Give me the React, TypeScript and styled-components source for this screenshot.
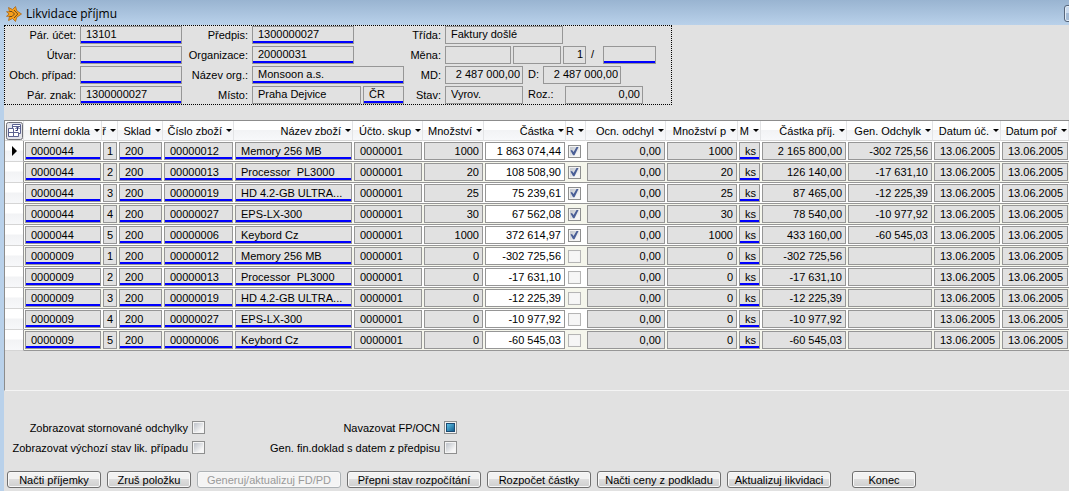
import React, { useState } from "react";
import styled, { createGlobalStyle, css } from "styled-components";

const GlobalStyle = createGlobalStyle`
  *, *::before, *::after { box-sizing: border-box; }
  html, body { margin: 0; padding: 0; background: #e1e1e1; }
  body, input, button { font: 11px/14px "Liberation Sans", Arial, sans-serif; color: #000; }
`;

const Window = styled.main`
  display: flex;
  flex-direction: column;
  min-height: 100vh;
  background: #e1e1e1;
  overflow: hidden;
`;

const TitleBar = styled.header`
  display: flex;
  align-items: center;
  justify-content: space-between;
  height: 25px;
  background: linear-gradient(#99b4d1, #b9d1ea);
`;

const Title = styled.h1`
  display: flex;
  align-items: center;
  gap: 4px;
  margin: 0;
  padding: 2px 0 0 6px;
  font: 12px/16px "Open Sans", "Noto Sans", sans-serif;
`;

const CaptionButton = styled.button`
  width: 28px;
  height: 17px;
  margin: 2px -23px 0 0;
  padding: 0;
  border: 1px solid #56657a;
  border-radius: 3px;
  background: linear-gradient(#c9daee 50%, #a3bbd6 50%);
  box-shadow: inset 0 0 0 1px #e3edf8;
`;

const Client = styled.div`
  flex: 1;
  border-left: 4px solid #b9d1ea;
`;

const HeaderForm = styled.form`
  display: grid;
  grid-template-columns: 71px 102px 62px 152px 33px 226px;
  grid-auto-rows: 18px;
  gap: 2px 4px;
  width: fit-content;
  border: 1px dotted #000;
`;

const FieldLabel = styled.label`
  padding-top: 2px;
  text-align: right;
  white-space: nowrap;
`;

const FieldGroup = styled.div`
  display: flex;
  gap: 2px;
`;

const InlineLabel = styled.label<{ $width: number }>`
  width: ${(p) => p.$width}px;
  padding: 1px 0 0 3px;
`;

const boxed = css<{ $link?: boolean; $right?: boolean }>`
  height: 18px;
  border: 1px solid #969696;
  box-shadow: ${(p) => (p.$link ? "inset 0 -2px 0 #0000ff" : "none")};
  text-align: ${(p) => (p.$right ? "right" : "left")};
`;

const Field = styled.input<{ $width: number; $link?: boolean; $right?: boolean }>`
  ${boxed}
  width: ${(p) => p.$width}px;
  padding: ${(p) => (p.$right ? "0 2px 2px 0" : "0 0 2px 5px")};
  border-radius: 0;
  background: #e1e1e1;
  outline: none;
`;

const GridPanel = styled.section`
  height: 271px;
  margin-top: 15px;
  border-top: 1px solid #8c8c8c;
  border-left: 1px solid #8c8c8c;
  border-bottom: 1px solid #f4f4f4;
  overflow: hidden;
`;

const Table = styled.table`
  width: 100%;
  min-width: 1064px;
  table-layout: fixed;
  border-collapse: separate;
  border-spacing: 0;
`;

const HeadCell = styled.th`
  height: 20px;
  padding: 0;
  border-bottom: 1px solid #d5d5d5;
  border-right: 1px solid #e3e4e6;
  background: linear-gradient(#fff 45%, #f2f3f5 50%, #f7f8fa);
  font-weight: normal;
`;

const SortButton = styled.button`
  display: flex;
  align-items: center;
  justify-content: flex-end;
  gap: 4px;
  width: 100%;
  height: 19px;
  padding: 0 1px 0 0;
  border: 0;
  background: none;
  overflow: hidden;
  white-space: nowrap;
`;

const Arrow = styled.i`
  flex: none;
  border: 3px solid transparent;
  border-top-color: #000;
  border-bottom: 0;
`;

const Row = styled.tr`
  background: #fff;
  &:nth-child(even) { background: #f5f6ec; }
`;

const Selector = styled.td`
  height: 21px;
  padding: 0 0 0 7px;
  border-right: 1px solid #969696;
  border-bottom: 1px solid #d5d5d5;
  background: linear-gradient(#fff 45%, #f2f3f5 50%, #f7f8fa);
`;

const Cell = styled.td`
  height: 21px;
  padding: 0 1px;
  border-bottom: 1px solid #969696;
`;

const CellBox = styled.div<{ $link?: boolean; $right?: boolean; $indent?: number }>`
  ${boxed}
  padding: 1px ${(p) => (p.$right ? 3 : 0)}px 0 ${(p) => (p.$right ? 0 : p.$indent ?? 5)}px;
  background: #e1e1e1;
  overflow: hidden;
  white-space: pre;
`;

const AmountInput = styled.input`
  display: block;
  width: 100%;
  height: 18px;
  padding: 0 3px 0 0;
  border: 1px solid #969696;
  border-radius: 0;
  background: #fff;
  text-align: right;
  outline: none;
`;

const Check = styled.input.attrs({ type: "checkbox" })<{ $faint?: boolean }>`
  appearance: none;
  display: grid;
  place-items: center;
  width: 13px;
  height: 13px;
  margin: 0;
  border: 1px solid ${(p) => (p.$faint ? "#b5b5b5" : "#8e8f8f")};
  background: ${(p) =>
    p.$faint ? "#f6f6f6" : "linear-gradient(135deg, #c8ccd2 15%, #f6f6f6 80%) content-box #f4f4f4"};
  padding: 1px;
  box-shadow: inset 0 0 0 1px #f4f4f4;

  &:checked::before {
    content: "";
    width: 9px;
    height: 9px;
    background: #4a5f97;
    clip-path: polygon(5% 45%, 22% 38%, 40% 62%, 76% 0, 97% 0, 50% 98%, 34% 98%);
  }
  &:indeterminate::before {
    content: "";
    width: 9px;
    height: 9px;
    border: 1px solid #1b4a72;
    background: linear-gradient(135deg, #5fc0e6, #14608f);
  }
`;

const CheckHolder = styled.div`
  padding-left: 1px;
`;

const Options = styled.fieldset`
  display: grid;
  grid-template-columns: 201px 252px;
  row-gap: 7px;
  margin: 30px 0 0;
  padding: 0;
  border: 0;
`;

const Option = styled.label`
  display: flex;
  align-items: center;
  justify-content: flex-end;
  gap: 4px;
  height: 13px;
  white-space: nowrap;
`;

const Actions = styled.footer`
  display: flex;
  gap: 6px;
  padding: 17px 0 3px 3px;
`;

const ActionButton = styled.button<{ $width: number; $apart?: boolean }>`
  width: ${(p) => p.$width}px;
  height: 17px;
  margin-left: ${(p) => (p.$apart ? 15 : 0)}px;
  padding: 0;
  border: 1px solid #707070;
  border-radius: 3px;
  background: linear-gradient(#f2f2f2 50%, #dddddd 50%, #cfcfcf);
  box-shadow: inset 0 0 0 1px #f8f8f8;
  white-space: nowrap;

  &:disabled {
    border-color: #adb2b5;
    background: #f4f4f4;
    color: #9a9a9a;
  }
`;

const Glyph = styled.svg`
  display: block;
`;

const LogoIcon = () => (
  <Glyph width="16" height="16" viewBox="0 0 16 16" aria-hidden="true">
    <path
      d="M2.500 1.500 6.500 3.500 9.500.5 10.800 4.800 15.500 8 10.800 11.200 9.500 15.500 6.500 12.500 2.500 14.500 3.500 10.300.5 10.300 3 8 .5 5.700 3.500 5.700Z"
      fill="#f9a01b"
      stroke="#a8671a"
      strokeWidth=".8"
    />
    <path d="M3.500 5.500H6L8.500 8 6 10.500H3.500M8 4l3.800 4L8 12" fill="none" stroke="#6b4a1c" strokeWidth="1" />
  </Glyph>
);

const GridIcon = () => (
  <Glyph width="18" height="18" viewBox="0 0 18 18" aria-hidden="true">
    <rect x="1.500" y=".5" width="16" height="17" rx="2" fill="#e4e5ec" stroke="#6f7078" />
    <path d="M7.500 2.500h8v9h-8z" fill="#fff" stroke="#5a6190" />
    <path d="M7.500 4.500h8" stroke="#5a6190" />
    <path d="M3.500 6.500h5v8h-5zM8.500 10.500h5v4h-5zM3.500 10.500h5" fill="#fff" stroke="#5a6190" />
    <path d="M10.500 8.500h2v-3M10.500 7l2-2 2 2" stroke="#2b3270" fill="none" />
  </Glyph>
);

const RowPointer = () => (
  <Glyph width="6" height="10" viewBox="0 0 6 10" role="img" aria-label="Aktuální řádek">
    <path d="M0 0 5 5 0 10Z" />
  </Glyph>
);

type Column = { title: string; width: number; link?: boolean; right?: boolean; indent?: number };

const columns: Column[] = [
  { title: "Interní dokla", width: 78, link: true },
  { title: "ř", width: 16, indent: 3 },
  { title: "Sklad", width: 45, link: true },
  { title: "Číslo zboží", width: 71, link: true },
  { title: "Název zboží", width: 119, link: true },
  { title: "Účto. skup", width: 70 },
  { title: "Množství", width: 61, right: true },
  { title: "Částka", width: 82, right: true },
  { title: "R", width: 20 },
  { title: "Ocn. odchyl", width: 80, right: true },
  { title: "Množství p", width: 72, right: true },
  { title: "M", width: 23, link: true },
  { title: "Částka příj.", width: 86, right: true },
  { title: "Gen. Odchylk", width: 86, right: true },
  { title: "Datum úč.", width: 68 },
  { title: "Datum poř", width: 68 },
];

const goods = [
  ["00000012", "Memory 256 MB"],
  ["00000013", "Processor  PL3000"],
  ["00000019", "HD 4.2-GB ULTRA..."],
  ["00000027", "EPS-LX-300"],
  ["00000006", "Keybord Cz"],
];

const received = [
  ["1000", "1 863 074,44", "2 165 800,00", "-302 725,56"],
  ["20", "108 508,90", "126 140,00", "-17 631,10"],
  ["25", "75 239,61", "87 465,00", "-12 225,39"],
  ["30", "67 562,08", "78 540,00", "-10 977,92"],
  ["1000", "372 614,97", "433 160,00", "-60 545,03"],
];

const rows = [
  ...goods.map(([code, name], i) => {
    const [qty, amount, taken, diff] = received[i];
    return ["0000044", `${i + 1}`, "200", code, name, "0000001", qty, amount, "1", "0,00", qty, "ks", taken, diff, "13.06.2005", "13.06.2005"];
  }),
  ...goods.map(([code, name], i) => {
    const diff = received[i][3];
    return ["0000009", `${i + 1}`, "200", code, name, "0000001", "0", diff, "", "0,00", "0", "ks", diff, "", "13.06.2005", "13.06.2005"];
  }),
];

const actions = [
  { text: "Načti příjemky", width: 94 },
  { text: "Zruš položku", width: 84 },
  { text: "Generuj/aktualizuj FD/PD", width: 144, disabled: true },
  { text: "Přepni stav rozpočítání", width: 134 },
  { text: "Rozpočet částky", width: 104 },
  { text: "Načti ceny z podkladu", width: 124 },
  { text: "Aktualizuj likvidaci", width: 104 },
  { text: "Konec", width: 64, apart: true },
];

const AMOUNT = 7;
const FLAG = 8;

function DataCell({ column, index, value }: { column: Column; index: number; value: string }) {
  if (index === AMOUNT) return <Cell><AmountInput defaultValue={value} aria-label={column.title} /></Cell>;
  if (index === FLAG)
    return (
      <Cell>
        <CheckHolder><Check defaultChecked={value === "1"} $faint={value !== "1"} aria-label={column.title} /></CheckHolder>
      </Cell>
    );
  return (
    <Cell>
      <CellBox $link={column.link} $right={column.right} $indent={column.indent}>{value}</CellBox>
    </Cell>
  );
}

export default function App() {
  const [current] = useState(0);
  return (
    <Window>
      <GlobalStyle />
      <TitleBar>
        <Title><LogoIcon />Likvidace příjmu</Title>
        <CaptionButton aria-label="Minimalizovat" />
      </TitleBar>
      <Client>
        <HeaderForm>
          <FieldLabel htmlFor="ucet">Pár. účet:</FieldLabel>
          <Field id="ucet" $width={102} $link readOnly value="13101" />
          <FieldLabel htmlFor="predpis">Předpis:</FieldLabel>
          <Field id="predpis" $width={102} $link readOnly value="1300000027" />
          <FieldLabel htmlFor="trida">Třída:</FieldLabel>
          <Field id="trida" $width={118} readOnly value="Faktury došlé" />

          <FieldLabel htmlFor="utvar">Útvar:</FieldLabel>
          <Field id="utvar" $width={102} $link readOnly value="" />
          <FieldLabel htmlFor="org">Organizace:</FieldLabel>
          <Field id="org" $width={102} $link readOnly value="20000031" />
          <FieldLabel htmlFor="mena">Měna:</FieldLabel>
          <FieldGroup>
            <Field id="mena" $width={66} readOnly value="" />
            <Field aria-label="Kurz" $width={48} readOnly value="" />
            <Field aria-label="Množství měny" $width={23} $right readOnly value="1" />
            <InlineLabel htmlFor="kurz" $width={13}>/</InlineLabel>
            <Field id="kurz" $width={53} $link readOnly value="" />
          </FieldGroup>

          <FieldLabel htmlFor="pripad">Obch. případ:</FieldLabel>
          <Field id="pripad" $width={102} $link readOnly value="" />
          <FieldLabel htmlFor="nazev">Název org.:</FieldLabel>
          <Field id="nazev" $width={152} $link readOnly value="Monsoon a.s." />
          <FieldLabel htmlFor="md">MD:</FieldLabel>
          <FieldGroup>
            <Field id="md" $width={78} $right readOnly value="2 487 000,00" />
            <InlineLabel htmlFor="dal" $width={16}>D:</InlineLabel>
            <Field id="dal" $width={78} $right readOnly value="2 487 000,00" />
          </FieldGroup>

          <FieldLabel htmlFor="znak">Pár. znak:</FieldLabel>
          <Field id="znak" $width={102} $link readOnly value="1300000027" />
          <FieldLabel htmlFor="misto">Místo:</FieldLabel>
          <FieldGroup>
            <Field id="misto" $width={109} readOnly value="Praha Dejvice" />
            <Field aria-label="Země" $width={41} $link readOnly value="ČR" />
          </FieldGroup>
          <FieldLabel htmlFor="stav">Stav:</FieldLabel>
          <FieldGroup>
            <Field id="stav" $width={78} readOnly value="Vyrov." />
            <InlineLabel htmlFor="rozdil" $width={38}>Roz.:</InlineLabel>
            <Field id="rozdil" $width={78} $right readOnly value="0,00" />
          </FieldGroup>
        </HeaderForm>

        <GridPanel>
          <Table>
            <colgroup>
              <col width={19} />
              {columns.map((c) => <col key={c.title} width={c.width} />)}
            </colgroup>
            <thead>
              <tr>
                <HeadCell><GridIcon /></HeadCell>
                {columns.map((c) => (
                  <HeadCell key={c.title}><SortButton>{c.title}<Arrow /></SortButton></HeadCell>
                ))}
              </tr>
            </thead>
            <tbody>
              {rows.map((row, r) => (
                <Row key={r}>
                  <Selector>{r === current && <RowPointer />}</Selector>
                  {columns.map((c, i) => <DataCell key={c.title} column={c} index={i} value={row[i]} />)}
                </Row>
              ))}
            </tbody>
          </Table>
        </GridPanel>

        <Options>
          <Option>Zobrazovat stornované odchylky<Check /></Option>
          <Option>Navazovat FP/OCN<Check ref={(el: HTMLInputElement | null) => { if (el) el.indeterminate = true; }} /></Option>
          <Option>Zobrazovat výchozí stav lik. případu<Check /></Option>
          <Option>Gen. fin.doklad s datem z předpisu<Check /></Option>
        </Options>

        <Actions>
          {actions.map((a) => (
            <ActionButton key={a.text} $width={a.width} $apart={a.apart} disabled={a.disabled}>{a.text}</ActionButton>
          ))}
        </Actions>
      </Client>
    </Window>
  );
}
